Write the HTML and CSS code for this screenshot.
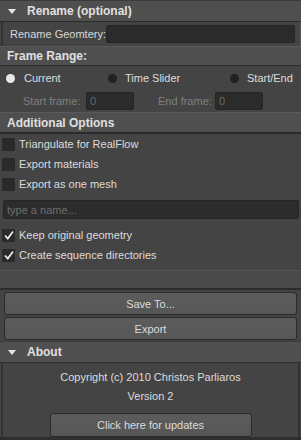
FILE: index.html
```html
<!DOCTYPE html>
<html>
<head>
<meta charset="utf-8">
<link rel="stylesheet" href="styles.css">
</head>
<body>
<div class="panel">
  <div class="section-head collapsible"><span class="tri"></span>Rename (optional)</div>
  <div class="rename-row">
    <span class="label">Rename Geomtery:</span>
    <div class="field wide"></div>
  </div>
  <div class="section-head">Frame Range:</div>
  <div class="radio-row">
    <div class="radio r1"><span class="dot on"></span>Current</div>
    <div class="radio r2"><span class="dot"></span>Time Slider</div>
    <div class="radio r3"><span class="dot"></span>Start/End</div>
  </div>
  <div class="frame-row">
    <span class="dim l1">Start frame:</span><div class="field small">0</div>
    <span class="dim l2">End frame:</span><div class="field small">0</div>
  </div>
  <div class="section-head thick">Additional Options</div>
  <div class="checks">
    <div class="check"><span class="box"></span>Triangulate for RealFlow</div>
    <div class="check"><span class="box"></span>Export materials</div>
    <div class="check"><span class="box"></span>Export as one mesh</div>
  </div>
  <div class="name-wrap"><div class="field name">type a name...</div></div>
  <div class="checks second">
    <div class="check"><span class="box"><svg width="12" height="12" viewBox="0 0 12 12"><path d="M2 6.5 L4.8 9.5 L10 2.5" fill="none" stroke="#e8e8e8" stroke-width="1.8"/></svg></span>Keep original geometry</div>
    <div class="check"><span class="box"><svg width="12" height="12" viewBox="0 0 12 12"><path d="M2 6.5 L4.8 9.5 L10 2.5" fill="none" stroke="#e8e8e8" stroke-width="1.8"/></svg></span>Create sequence directories</div>
  </div>
  <div class="spacer"></div>
  <div class="band"></div>
  <div class="buttons">
    <div class="btn">Save To...</div>
    <div class="btn">Export</div>
  </div>
  <div class="section-head collapsible about"><span class="tri"></span>About</div>
  <div class="about-body">
    <div class="line">Copyright (c) 2010 Christos Parliaros</div>
    <div class="line">Version 2</div>
    <div class="btn upd">Click here for updates</div>
  </div>
</div>
</body>
</html>
```

FILE: styles.css
```css
* { box-sizing: border-box; }
html, body { margin: 0; padding: 0; background: #444444; }
body { width: 301px; height: 440px; overflow: hidden; }
.panel {
  width: 301px; height: 440px;
  font-family: "Liberation Sans", Arial, sans-serif;
  font-size: 11px;
  color: #dcdcdc;
  background: #444444;
  display: flex; flex-direction: column;
  border-bottom: 3px solid #2e2e2e;
  white-space: nowrap;
}
.section-head {
  background: #4f4f4f;
  font-weight: bold;
  font-size: 12px;
  color: #e0e0e0;
  display: flex; align-items: center;
  padding-left: 7px;
  height: 20px;
  border-top: 1px solid #5a5a5a;
  border-bottom: 1px solid #2c2c2c;
  flex: none;
}
.section-head.collapsible { height: 22px; padding-left: 8px; border-top: 1px solid #3a3a3a; }
.section-head.thick { height: 22px; border-bottom: 2px solid #2a2a2a; }
.tri {
  width: 0; height: 0;
  border-left: 4px solid transparent; border-right: 4px solid transparent;
  border-top: 5px solid #e4e4e4;
  margin-right: 11px;
}
.rename-row {
  height: 24px; flex: none;
  display: flex; align-items: center;
  padding-left: 7px; padding-right: 5px;
  border-left: 2px solid #333;
  border-right: 1px solid #5a5a5a;
  margin-left: 1px;
}
.rename-row .label { width: 96px; flex: none; color: #d8d8d8; }
.field {
  background: #2b2b2b;
  border: 1px solid #252525;
  border-radius: 2px;
  color: #666;
  display: flex; align-items: center;
  padding-left: 3px;
  flex: none;
}
.field.wide { flex: 1; height: 18px; }
.radio-row {
  height: 24px; flex: none;
  display: flex; align-items: center;
  padding-left: 6px;
}
.radio { display: flex; align-items: center; flex: none; }
.radio.r1 { width: 102px; }
.radio.r2 { width: 122px; }
.dot {
  width: 9px; height: 9px; border-radius: 50%;
  background: #222; display: inline-block; flex: none;
}
.r1 .dot { margin-right: 9px; }
.r2 .dot, .r3 .dot { margin-right: 8px; }
.dot.on { background: #e8e8e8; }
.frame-row {
  height: 22px; flex: none;
  display: flex; align-items: center;
  padding-left: 23px;
}
.dim { color: #808080; flex: none; }
.l1 { width: 63px; }
.l2 { margin-left: 24px; width: 57px; }
.field.small { width: 48px; height: 18px; color: #6a6a6a; }
.checks { display: flex; flex-direction: column; flex: none; }
.check {
  height: 20px; display: flex; align-items: center;
  padding-left: 2px;
}
.box {
  width: 13px; height: 13px; background: #2a2a2a; flex: none;
  margin-right: 4px; display: flex; align-items: center; justify-content: center;
  border-radius: 1px;
}
.name-wrap { padding: 6px 2px 6px 3px; flex: none; }
.field.name {
  height: 19px; color: #6e6e6e; padding-left: 3px;
  background: #2c2c2c;
}
.spacer { height: 5px; flex: none; }
.band {
  height: 20px; flex: none;
  background: #4a4a4a;
  border-top: 1px solid #555;
  border-bottom: 2px solid #2c2c2c;
}
.buttons { display: flex; flex-direction: column; gap: 2px; padding: 2px 4px 1px 4px; flex: none; }
.btn {
  height: 23px;
  background: linear-gradient(#5c5c5c, #565656);
  border: 1px solid #2a2a2a;
  border-radius: 3px;
  display: flex; align-items: center; justify-content: center;
  color: #dcdcdc;
  flex: none;
}
.about { height: 22px; border-top: 1px solid #2a2a2a; background: #505050; }
.about-body {
  flex: 1;
  display: flex; flex-direction: column; align-items: center;
  padding-top: 4px;
  border-left: 2px solid #333;
  border-right: 2px solid #333;
  margin: 0 1px;
}
.about-body .line { height: 19px; display: flex; align-items: center; }
.btn.upd { width: 202px; margin-top: 8px; height: 24px; }
```
